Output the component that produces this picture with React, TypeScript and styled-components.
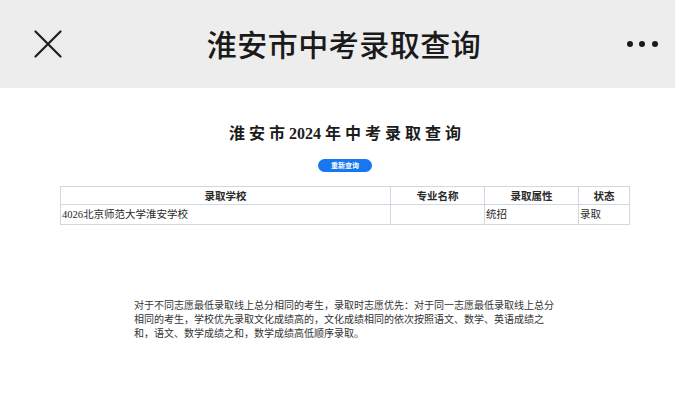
import React from 'react'
import styled, { createGlobalStyle } from 'styled-components'

const GlobalStyle = createGlobalStyle`
  html, body {
    margin: 0;
    padding: 0;
    background: #ffffff;
  }
  body {
    font-family: "Liberation Serif", "Noto Sans CJK SC", serif;
  }
`

interface Column {
  title: string
  width: number
}

const columns: Column[] = [
  { title: '录取学校', width: 330 },
  { title: '专业名称', width: 94 },
  { title: '录取属性', width: 94 },
  { title: '状态', width: 51 }
]

const row = ['4026北京师范大学淮安学校', '', '统招', '录取']

const notes = [
  '对于不同志愿最低录取线上总分相同的考生，录取时志愿优先：对于同一志愿最低录取线上总分',
  '相同的考生，学校优先录取文化成绩高的，文化成绩相同的依次按照语文、数学、英语成绩之',
  '和，语文、数学成绩之和，数学成绩高低顺序录取。'
]

const App: React.FC = () => {
  return (
    <Page>
      <GlobalStyle />
      <NavBar>
        <NavIcon aria-label="关闭">
          <svg width="28" height="28" viewBox="0 0 28 28">
            <path
              d="M1.5 1.5 L26.5 26.5 M26.5 1.5 L1.5 26.5"
              stroke="#1e1e1e"
              strokeWidth="2.2"
              strokeLinecap="round"
              fill="none"
            />
          </svg>
        </NavIcon>
        <NavTitle>淮安市中考录取查询</NavTitle>
        <NavIcon aria-label="更多">
          <Dots>
            <Dot />
            <Dot />
            <Dot />
          </Dots>
        </NavIcon>
      </NavBar>

      <Content>
        <Heading>
          淮安市<Digits>2024</Digits>年中考录取查询
        </Heading>
        <RequeryButton>重新查询</RequeryButton>

        <Table>
          <colgroup>
            {columns.map(col => (
              <col key={col.title} style={{ width: col.width }} />
            ))}
          </colgroup>
          <thead>
            <tr>
              {columns.map(col => (
                <HeadCell key={col.title}>{col.title}</HeadCell>
              ))}
            </tr>
          </thead>
          <tbody>
            <tr>
              {row.map((value, i) => (
                <Cell key={i}>{value}</Cell>
              ))}
            </tr>
          </tbody>
        </Table>

        <Notes>
          {notes.map(line => (
            <NoteLine key={line}>{line}</NoteLine>
          ))}
        </Notes>
      </Content>
    </Page>
  )
}

const Page = styled.div`
  width: 675px;
  height: 413px;
  overflow: hidden;
  background: #ffffff;
`
const NavBar = styled.div`
  height: 88px;
  background: #ededed;
  display: flex;
  align-items: center;
  justify-content: space-between;
  padding: 0 16px 0 33px;
  box-sizing: border-box;
`
const NavIcon = styled.div`
  width: 30px;
  height: 30px;
  display: flex;
  align-items: center;
  justify-content: center;
  margin-top: -1px;
`
const NavTitle = styled.div`
  font-family: "Noto Sans CJK SC", sans-serif;
  font-size: 30px;
  font-weight: 500;
  color: #1a1a1a;
  letter-spacing: 0.5px;
  margin-left: -4px;
  margin-top: -2px;
`
const Dots = styled.div`
  display: flex;
  gap: 6.5px;
  margin-left: -4px;
`
const Dot = styled.span`
  width: 6px;
  height: 6px;
  border-radius: 50%;
  background: #1a1a1a;
`
const Content = styled.div`
  display: flex;
  flex-direction: column;
  align-items: center;
  padding: 36px 0 0 15px;
`
const Heading = styled.div`
  font-family: "Liberation Serif", "Noto Sans CJK SC", serif;
  font-size: 16px;
  font-weight: 700;
  color: #1c1c1c;
  letter-spacing: 4px;
  line-height: 20px;
  margin-left: 4px;
`
const Digits = styled.span`
  letter-spacing: 0;
  margin-right: 4px;
`
const RequeryButton = styled.button`
  margin-top: 15px;
  width: 54px;
  height: 13px;
  padding: 0;
  border: none;
  border-radius: 7px;
  background: #1677f0;
  color: #ffffff;
  font-family: "Noto Sans CJK SC", sans-serif;
  font-size: 7px;
  line-height: 13px;
  font-weight: 700;
`
const Table = styled.table`
  margin-top: 14px;
  width: 569px;
  border-collapse: collapse;
  table-layout: fixed;
  font-family: "Liberation Serif", "Noto Sans CJK SC", serif;
`
const HeadCell = styled.th`
  height: 17px;
  padding: 0;
  border: 1px solid #cfd9e4;
  font-family: "Noto Sans CJK SC", sans-serif;
  font-size: 10.5px;
  font-weight: 700;
  color: #2a2a2a;
  text-align: center;
  line-height: 15px;
`
const Cell = styled.td`
  height: 19px;
  padding: 0 1px;
  border: 1px solid #cfd9e4;
  font-size: 10.5px;
  color: #2a2a2a;
  text-align: left;
  line-height: 17px;
`
const Notes = styled.div`
  margin-top: 73px;
  margin-left: 4px;
  width: 426px;
  font-family: "Noto Sans CJK SC", sans-serif;
  font-size: 10px;
  line-height: 14px;
  color: #333333;
`
const NoteLine = styled.div`
  white-space: nowrap;
`

export default App
